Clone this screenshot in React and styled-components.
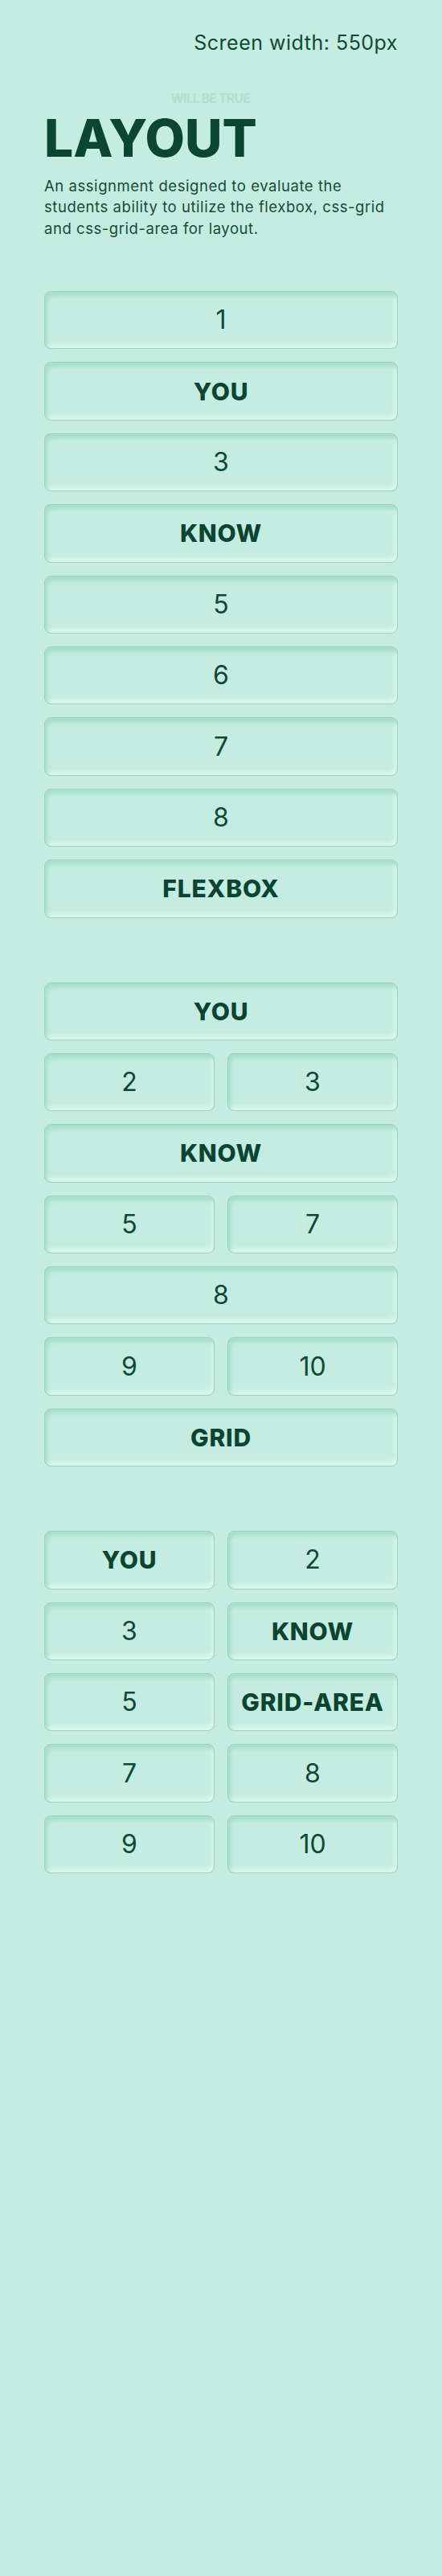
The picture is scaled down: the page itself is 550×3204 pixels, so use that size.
import React from "react";
import styled, { createGlobalStyle, css } from "styled-components";

const GlobalStyle = createGlobalStyle`
  html, body {
    margin: 0;
    padding: 0;
    background: #c5ece0;
  }
  body {
    font-family: Inter, "Noto Sans", sans-serif;
    color: #0b4733;
  }
  * { box-sizing: border-box; }
`;

const Page = styled.main`
  width: 440px;
  margin: 0 auto;
  padding-top: 39px;
  padding-bottom: 875px;
  display: flex;
  flex-direction: column;
`;

const ScreenWidth = styled.div`
  text-align: right;
  font-size: 25px;
  line-height: 29px;
  font-weight: 400;
  letter-spacing: 0.5px;
  color: #0f4a37;
`;

const Kicker = styled.div`
  margin-top: 44px;
  padding-left: 157px;
  font-size: 16px;
  line-height: 20px;
  font-weight: 800;
  letter-spacing: -0.9px;
  color: #b6dfd1;
`;

const Title = styled.h1`
  margin: 8px 0 0;
  font-size: 64px;
  line-height: 64px;
  font-weight: 800;
  color: #0b4632;
`;

const Intro = styled.p`
  margin: 13.5px 0 0;
  font-size: 18.5px;
  line-height: 26.5px;
  font-weight: 400;
  letter-spacing: 0.55px;
  white-space: nowrap;
  color: #154c39;
`;

const FlexSection = styled.section`
  margin-top: 65px;
  display: flex;
  flex-direction: column;
  gap: 16px;
`;

const GridSection = styled.section`
  margin-top: 80px;
  display: grid;
  grid-template-columns: 1fr 1fr;
  column-gap: 16px;
  row-gap: 16px;
`;

const AreaSection = styled.section`
  margin-top: 80px;
  display: grid;
  grid-template-columns: 1fr 1fr;
  gap: 16px;
  grid-template-areas:
    "you two"
    "three know"
    "five area"
    "seven eight"
    "nine ten";
`;

const Box = styled.div`
  height: 72.4px;
  display: flex;
  align-items: center;
  justify-content: center;
  border: 1px solid #a3cfbf;
  border-radius: 8px;
  background: #c5ece0;
  box-shadow: inset 3px 5px 5px #a4dfcb, inset -3px -5px 5px #d6f8ec;
  font-size: 32px;
  line-height: 1;
  font-weight: 400;
  color: #0d4935;
  ${(p) =>
    p.$word &&
    css`
      font-size: 30px;
      font-weight: 800;
      letter-spacing: 0.8px;
      color: #0a4532;
    `}
  ${(p) => p.$wide && css`grid-column: 1 / -1;`}
  ${(p) => p.$area && css`grid-area: ${p.$area};`}
`;

const flexItems = [
  ["1"], ["YOU", true], ["3"], ["KNOW", true], ["5"], ["6"], ["7"], ["8"], ["FLEXBOX", true],
];

const gridItems = [
  { t: "YOU", w: true, wide: true },
  { t: "2" },
  { t: "3" },
  { t: "KNOW", w: true, wide: true },
  { t: "5" },
  { t: "7" },
  { t: "8", wide: true },
  { t: "9" },
  { t: "10" },
  { t: "GRID", w: true, wide: true },
];

const areaItems = [
  { t: "YOU", w: true, a: "you" },
  { t: "2", a: "two" },
  { t: "3", a: "three" },
  { t: "KNOW", w: true, a: "know" },
  { t: "5", a: "five" },
  { t: "GRID-AREA", w: true, a: "area" },
  { t: "7", a: "seven" },
  { t: "8", a: "eight" },
  { t: "9", a: "nine" },
  { t: "10", a: "ten" },
];

export default function App() {
  return (
    <>
      <GlobalStyle />
      <Page>
        <ScreenWidth>Screen width: 550px</ScreenWidth>
        <Kicker>WILL BE TRUE</Kicker>
        <Title>LAYOUT</Title>
        <Intro>
          An assignment designed to evaluate the
          <br />
          students ability to utilize the flexbox, css-grid
          <br />
          and css-grid-area for layout.
        </Intro>

        <FlexSection>
          {flexItems.map(([t, w], i) => (
            <Box key={i} $word={w}>{t}</Box>
          ))}
        </FlexSection>

        <GridSection>
          {gridItems.map((it, i) => (
            <Box key={i} $word={it.w} $wide={it.wide}>{it.t}</Box>
          ))}
        </GridSection>

        <AreaSection>
          {areaItems.map((it, i) => (
            <Box key={i} $word={it.w} $area={it.a}>{it.t}</Box>
          ))}
        </AreaSection>
      </Page>
    </>
  );
}
